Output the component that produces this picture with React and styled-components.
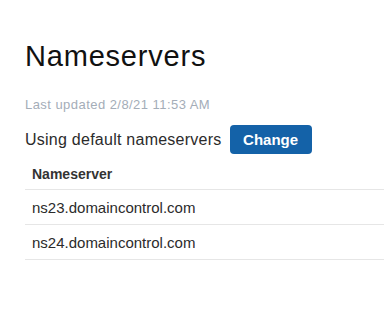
import styled, { createGlobalStyle } from "styled-components";

const GlobalStyle = createGlobalStyle`
  body {
    margin: 0;
    background: #fff;
    font-family: "Liberation Sans", Arial, sans-serif;
    color: #2b2b2b;
  }
`;

const Page = styled.div`
  padding: 36px 0 0 25px;
`;

const Title = styled.h1`
  margin: 0;
  font-size: 29px;
  font-weight: 400;
  line-height: 40px;
  letter-spacing: 0.8px;
  color: #111;
`;

const Updated = styled.p`
  margin: 21px 0 0;
  font-size: 13px;
  line-height: 16px;
  letter-spacing: 0.45px;
  color: #a4adb8;
`;

const StatusRow = styled.div`
  display: flex;
  align-items: center;
  gap: 8px;
  margin-top: 12px;
`;

const StatusText = styled.span`
  font-size: 16px;
  letter-spacing: 0.25px;
  color: #2b2b2b;
`;

const ChangeBtn = styled.button`
  width: 82px;
  height: 29px;
  border: none;
  border-radius: 4px;
  background-color: #1462a8;
  color: #fff;
  font-family: inherit;
  font-size: 15px;
  font-weight: 700;
  cursor: pointer;
`;

const Table = styled.div`
  margin-top: 5px;
`;

const Row = styled.div`
  display: flex;
  align-items: center;
  height: ${(p) => (p.$head ? "30px" : "34px")};
  padding-left: 7px;
  border-bottom: 1px solid #e6e6e6;
  font-size: ${(p) => (p.$head ? "14px" : "15px")};
  font-weight: ${(p) => (p.$head ? 700 : 400)};
  color: ${(p) => (p.$head ? "#333" : "#2b2b2b")};
`;

const servers = ["ns23.domaincontrol.com", "ns24.domaincontrol.com"];

function App() {
  return (
    <>
      <GlobalStyle />
      <Page>
        <Title>Nameservers</Title>
        <Updated>Last updated 2/8/21 11:53 AM</Updated>
        <StatusRow>
          <StatusText>Using default nameservers</StatusText>
          <ChangeBtn>Change</ChangeBtn>
        </StatusRow>
        <Table>
          <Row $head>Nameserver</Row>
          {servers.map((s) => (
            <Row key={s}>{s}</Row>
          ))}
        </Table>
      </Page>
    </>
  );
}

export default App;
